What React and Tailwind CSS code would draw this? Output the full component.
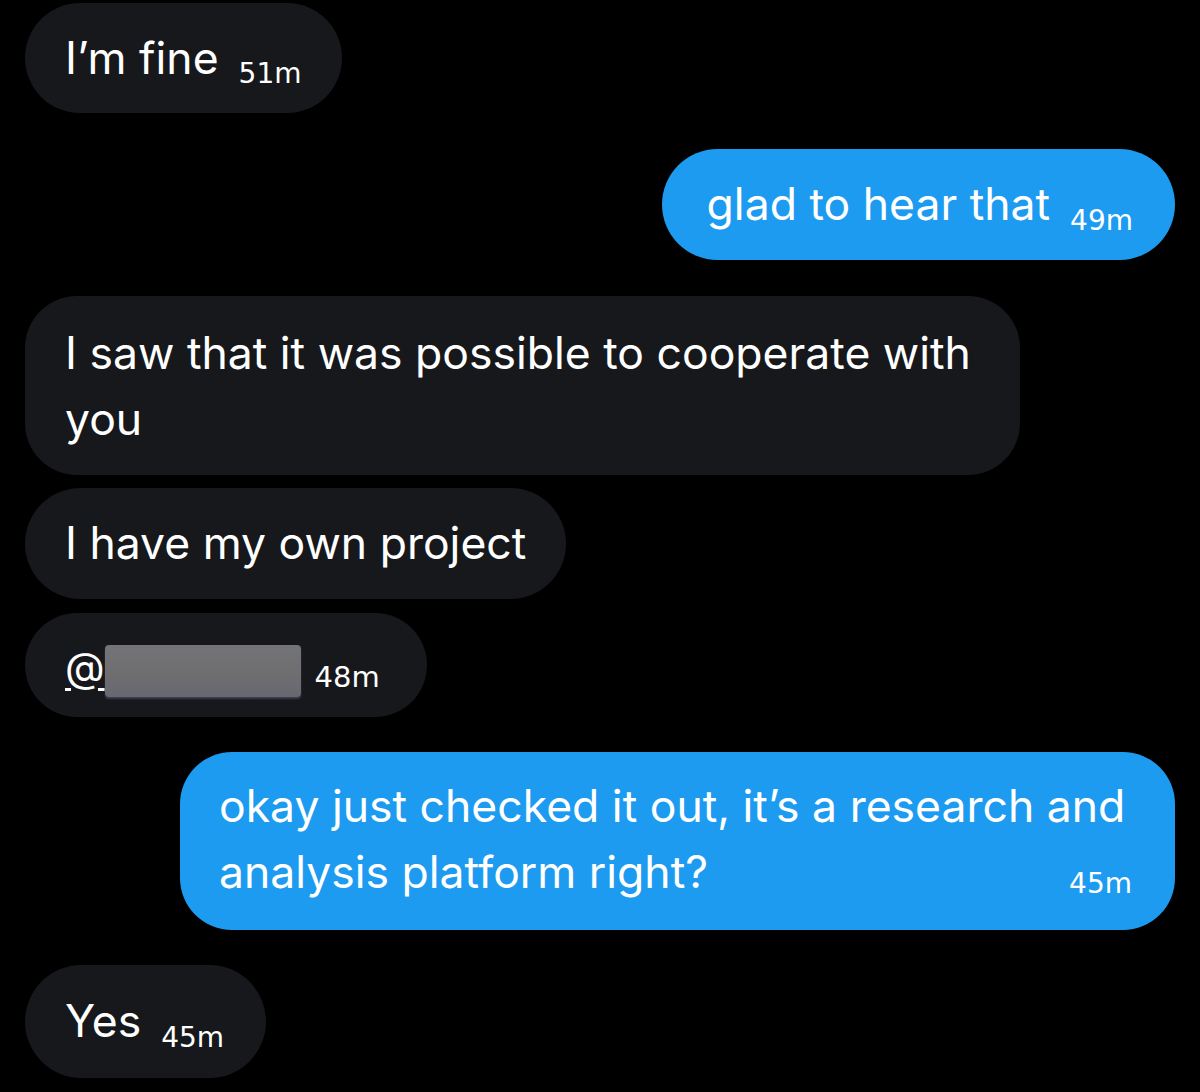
import React from "react";

const font = { fontFamily: "Inter, 'Liberation Sans', sans-serif" };

function Stamp({ children, className = "" }) {
  return (
    <span className={"font-['DejaVu_Sans',sans-serif] text-[28px] leading-none text-white shrink-0 " + className}>
      {children}
    </span>
  );
}

export default function App() {
  return (
    <div
      className="w-[1200px] h-[1092px] bg-black text-white overflow-hidden flex flex-col pt-[3px]"
      style={font}
    >
      {/* B1 */}
      <div className="ml-[25px] self-start h-[110px] rounded-full bg-[#16181c] pl-[40px] pr-[40px] flex items-center gap-[20px]">
        <span className="text-[44.5px] leading-none">I’m fine</span>
        <Stamp className="mt-[32px]">51m</Stamp>
      </div>

      {/* B2 */}
      <div className="mt-[36px] mr-[25px] self-end h-[111px] rounded-full bg-[#1d9bf0] pl-[45px] pr-[42px] flex items-center gap-[20px]">
        <span className="text-[44.5px] leading-none">glad to hear that</span>
        <Stamp className="mt-[32px]">49m</Stamp>
      </div>

      {/* B3 */}
      <div className="mt-[36px] ml-[25px] self-start w-[995px] h-[179px] rounded-[52px] bg-[#16181c] pl-[40px] pr-[40px] flex items-center">
        <p className="text-[44.5px] leading-[66px] whitespace-nowrap">
          I saw that it was possible to cooperate with
          <br />
          you
        </p>
      </div>

      {/* B4 */}
      <div className="mt-[13px] ml-[25px] self-start h-[111px] rounded-full bg-[#16181c] pl-[40px] pr-[40px] flex items-center">
        <span className="text-[44.5px] leading-none">I have my own project</span>
      </div>

      {/* B5 */}
      <div className="mt-[14px] ml-[25px] self-start w-[402px] h-[104px] rounded-full bg-[#16181c] pl-[40px] flex items-center">
        <span className="text-[41px] leading-none underline underline-offset-[6px] decoration-[3px] mt-[4px]">@</span>
        <span className="w-[196px] h-[52px] mt-[12px] rounded-[4px] bg-gradient-to-b from-[#747476] via-[#6f6f71] to-[#676770] shadow-[0_2px_2px_rgba(120,120,160,0.4)]" />
        <Stamp className="ml-[14px] mt-[24px] text-[29px]">48m</Stamp>
      </div>

      {/* B6 */}
      <div className="mt-[35px] mr-[25px] self-end w-[995px] h-[178px] rounded-[52px] bg-[#1d9bf0] pl-[39px] pr-[43px] flex flex-col justify-center pb-[4px]">
        <p className="text-[44.5px] leading-[66px] whitespace-nowrap">
          okay just checked it out, it’s a research and
        </p>
        <div className="flex items-center justify-between">
          <span className="text-[44.5px] leading-[66px] whitespace-nowrap">analysis platform right?</span>
          <Stamp className="mt-[24px]">45m</Stamp>
        </div>
      </div>

      {/* B7 */}
      <div className="mt-[35px] ml-[25px] self-start h-[113px] rounded-full bg-[#16181c] pl-[40px] pr-[42px] flex items-center gap-[20px]">
        <span className="text-[44.5px] leading-none">Yes</span>
        <Stamp className="mt-[32px]">45m</Stamp>
      </div>
    </div>
  );
}
